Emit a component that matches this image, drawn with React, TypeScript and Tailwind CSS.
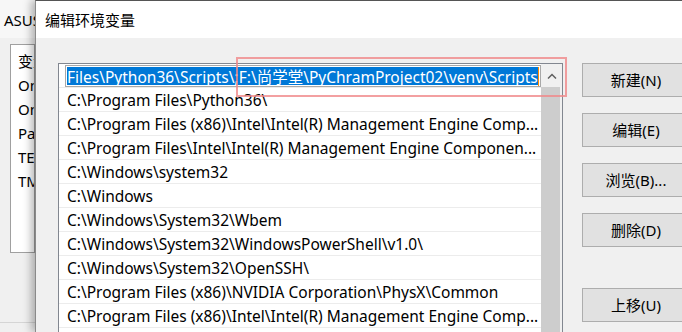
import React from "react";

const FONT = { fontFamily: '"Noto Sans", "Noto Sans CJK SC", sans-serif' };

const rows = [
  "C:\\Program Files\\Python36\\",
  "C:\\Program Files (x86)\\Intel\\Intel(R) Management Engine Comp...",
  "C:\\Program Files\\Intel\\Intel(R) Management Engine Componen...",
  "C:\\Windows\\system32",
  "C:\\Windows",
  "C:\\Windows\\System32\\Wbem",
  "C:\\Windows\\System32\\WindowsPowerShell\\v1.0\\",
  "C:\\Windows\\System32\\OpenSSH\\",
  "C:\\Program Files (x86)\\NVIDIA Corporation\\PhysX\\Common",
  "C:\\Program Files (x86)\\Intel\\Intel(R) Management Engine Comp...",
];

function Btn({ label, className }: { label: string; className?: string }) {
  return (
    <div
      className={`h-[34px] w-[108px] shrink-0 bg-[#e1e1e1] border border-[#adadad] flex items-center justify-center pt-[1px] text-[15px] text-black ${className ?? ""}`}
    >
      {label}
    </div>
  );
}

export default function App() {
  return (
    <div
      className="relative w-[682px] h-[332px] overflow-hidden flex bg-[#f0f0f0] text-black"
      style={FONT}
    >
      {/* background window */}
      <div className="w-[35px] shrink-0 flex flex-col bg-[#f0f0f0]">
        <div className="h-[38px] shrink-0 bg-[#f7f7f7] pl-[4px] pt-[9px] text-[15px] leading-[22px] whitespace-nowrap">
          ASUS
        </div>
        <div className="ml-[10px] mt-[6px] h-[209px] border border-[#a0a0a0] bg-white flex flex-col pt-[4px] text-[15px] leading-[24px] pl-[7px] whitespace-nowrap overflow-hidden">
          <div>变量</div>
          <div>On</div>
          <div>On</div>
          <div>Pa</div>
          <div>TE</div>
          <div>TM</div>
        </div>
        <div className="mt-[69px] h-px bg-[#d5d5d5]" />
      </div>

      {/* dialog */}
      <div className="relative z-10 flex-1 flex flex-col border-l border-t border-l-[#8a8a8a] border-t-[#555555] shadow-[-4px_0_8px_rgba(0,0,0,0.28)] bg-[#f0f0f0]">
        <div className="h-[37px] shrink-0 bg-white flex items-center pl-[9px] pt-[1px] text-[15px]">
          编辑环境变量
        </div>
        <div className="flex pt-[25px] pl-[22px]">
          {/* list box */}
          <div className="w-[505px] h-[300px] shrink-0 border border-[#828790] bg-white flex">
            <div className="w-[482px] flex flex-col text-[15.5px]">
              <div className="h-[24px] shrink-0 pt-[1px] pl-[6px] border-b border-[#ececec]">
                <div className="h-[22px] w-[476px] border border-[#a8a8a8] p-px flex justify-start overflow-hidden">
                  <div className="flex items-center bg-[#0078d7] text-white whitespace-nowrap leading-[20px] pt-[1px]">
                    <span>Files\Python36\Scripts\;F:\尚学堂\PyChramProject02\venv\Scripts</span>
                    <span className="w-px h-[19px] bg-[#ff8c00]" />
                  </div>
                </div>
              </div>
              {rows.map((r, i) => (
                <div
                  key={i}
                  className="h-[24px] shrink-0 pl-[8px] pt-[2px] border-b border-[#ececec] flex items-center whitespace-nowrap overflow-hidden"
                >
                  {r}
                </div>
              ))}
            </div>
            <div className="w-[21px] flex flex-col bg-[#f0f0f0]">
              <div className="h-[23px] flex items-center justify-center">
                <svg width="10" height="6" viewBox="0 0 10 6">
                  <path d="M1 5.5 L5 1.5 L9 5.5" fill="none" stroke="#606060" strokeWidth="1.5" />
                </svg>
              </div>
              <div className="flex-1 w-[19px] bg-[#cdcdcd]" />
            </div>
          </div>
          {/* buttons */}
          <div className="ml-[19px] flex flex-col">
            <Btn label="新建(N)" />
            <Btn label="编辑(E)" className="mt-[16px]" />
            <Btn label="浏览(B)..." className="mt-[16px]" />
            <Btn label="删除(D)" className="mt-[16px]" />
            <Btn label="上移(U)" className="mt-[41px]" />
          </div>
        </div>
      </div>

      {/* red highlight box */}
      <div className="absolute z-20 left-[236px] top-[57px] w-[331px] h-[40px] border-2 border-[#f0888a]/80" />
    </div>
  );
}
